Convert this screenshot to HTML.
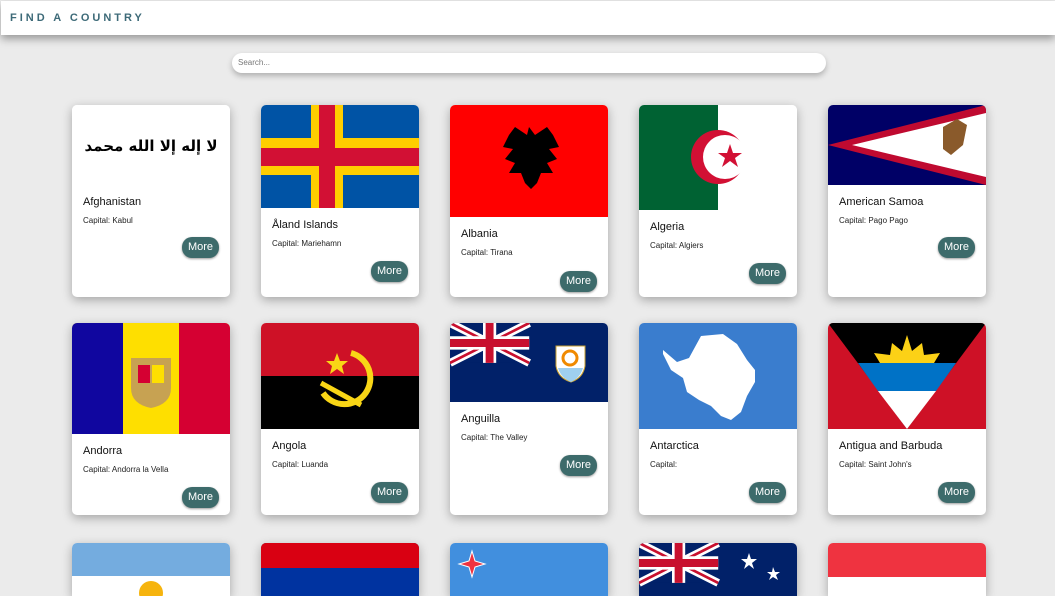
<!DOCTYPE html>
<html style="width:1055px;height:596px;overflow:hidden"><head><meta charset="utf-8"><style>
*{box-sizing:border-box;margin:0;padding:0}
body{width:1055px;height:596px;overflow:hidden;background:#ebebeb;font-family:"Liberation Sans","DejaVu Sans",sans-serif;position:relative}
.hdr{position:absolute;left:1px;top:1px;width:1054px;height:34px;background:#fff;box-shadow:0 4px 8px rgba(0,0,0,.35)}
.hdr span{position:absolute;left:9px;top:11px;font-size:11px;font-weight:bold;letter-spacing:3px;color:#3d6a78}
.search{position:absolute;left:232px;top:53px;width:594px;height:20px;border-radius:10px;background:#fff;box-shadow:0 3px 6px rgba(0,0,0,.25);font-size:8px;color:#777;padding:5px 0 0 6px}
.card{position:absolute;width:158px;height:192px;background:#fff;border-radius:5px;box-shadow:0 3px 10px rgba(0,0,0,.3);overflow:hidden}
.card.r3{height:53px;border-radius:5px 5px 0 0}
.card svg{display:block;width:158px}
.t{font-size:11px;line-height:14px;margin:10px 0 0 11px;color:#111}
.c{font-size:8px;line-height:10px;margin:7px 0 0 11px;color:#222}
.b{position:absolute;right:11px;width:37px;height:21px;border-radius:10px;background:#3d6b6b;color:#fff;font-size:11px;text-align:center;line-height:21px;box-shadow:0 1px 2px rgba(0,0,0,.4)}
</style></head><body>
<div class="hdr"><span>FIND A COUNTRY</span></div>
<div class="search">Search...</div>

<svg width="0" height="0" style="position:absolute"><defs>
<g id="uj"><rect width="60" height="30" fill="#012169"/><path d="M0 0L60 30M60 0L0 30" stroke="#fff" stroke-width="6"/><path d="M0 0L60 30M60 0L0 30" stroke="#c8102e" stroke-width="2"/><path d="M30 0V30M0 15H60" stroke="#fff" stroke-width="10"/><path d="M30 0V30M0 15H60" stroke="#c8102e" stroke-width="6"/></g>
</defs></svg>

<div class="card" style="left:72px;top:105px"><svg height="80" viewBox="0 0 158 80"><rect width="158" height="80" fill="#fff"/><text x="79" y="46" text-anchor="middle" font-size="15" font-weight="bold" font-family="DejaVu Sans" fill="#000">لا إله إلا الله محمد</text></svg>
<div class="t">Afghanistan</div><div class="c">Capital: Kabul</div><div class="b" style="top:132px">More</div></div>

<div class="card" style="left:261px;top:105px"><svg height="103" viewBox="0 0 158 103"><rect width="158" height="103" fill="#0053a5"/><rect x="50" width="32" height="103" fill="#ffce00"/><rect y="33" width="158" height="37" fill="#ffce00"/><rect x="58" width="16" height="103" fill="#d21034"/><rect y="43" width="158" height="18" fill="#d21034"/></svg>
<div class="t">Åland Islands</div><div class="c">Capital: Mariehamn</div><div class="b" style="top:156px">More</div></div>

<div class="card" style="left:450px;top:105px"><svg height="112" viewBox="0 0 158 112"><rect width="158" height="112" fill="#f00"/><path d="M79 22l6 8 12-8 6 8 6 12-10 2 8 10-10 4 6 10-12 0-4 10-6 6-6-6-4-10-12 0 6-10-10-4 8-10-10-2 6-12 6-8 12 8z" fill="#000"/></svg>
<div class="t">Albania</div><div class="c">Capital: Tirana</div><div class="b" style="top:166px">More</div></div>

<div class="card" style="left:639px;top:105px"><svg height="105" viewBox="0 0 158 105"><rect width="158" height="105" fill="#fff"/><rect width="79" height="105" fill="#006233"/><circle cx="79" cy="52" r="27" fill="#d21034"/><circle cx="86" cy="52" r="22" fill="#fff"/><path d="M91 39l3 9h9l-7 5 3 9-8-6-8 6 3-9-7-5h9z" fill="#d21034"/></svg>
<div class="t">Algeria</div><div class="c">Capital: Algiers</div><div class="b" style="top:158px">More</div></div>

<div class="card" style="left:828px;top:105px"><svg height="80" viewBox="0 0 158 80"><rect width="158" height="80" fill="#000066"/><path d="M158 0V80L0 40z" fill="#bf0a30"/><path d="M158 8V72L24 40z" fill="#fff"/><path d="M115 22l14-8 10 6-4 20-12 10-8-6z" fill="#8a5a2b"/></svg>
<div class="t">American Samoa</div><div class="c">Capital: Pago Pago</div><div class="b" style="top:132px">More</div></div>

<div class="card" style="left:72px;top:323px"><svg height="111" viewBox="0 0 158 111"><rect width="158" height="111" fill="#fedf00"/><rect width="51" height="111" fill="#10069f"/><rect x="107" width="51" height="111" fill="#d50032"/><path d="M59 35h40v30q0 16-20 20q-20-4-20-20z" fill="#c7a252"/><rect x="66" y="42" width="12" height="18" fill="#d50032"/><rect x="80" y="42" width="12" height="18" fill="#fedf00"/></svg>
<div class="t">Andorra</div><div class="c">Capital: Andorra la Vella</div><div class="b" style="top:164px">More</div></div>

<div class="card" style="left:261px;top:323px"><svg height="106" viewBox="0 0 158 106"><rect width="158" height="53" fill="#ce1126"/><rect y="53" width="158" height="53" fill="#000"/><path d="M90 30a26 26 0 1 1-28 40" fill="none" stroke="#f9d616" stroke-width="6"/><path d="M60 60l40 22" stroke="#f9d616" stroke-width="5"/><path d="M76 30l3 8h8l-6 5 2 8-7-5-7 5 2-8-6-5h8z" fill="#f9d616"/></svg>
<div class="t">Angola</div><div class="c">Capital: Luanda</div><div class="b" style="top:159px">More</div></div>

<div class="card" style="left:450px;top:323px"><svg height="79" viewBox="0 0 158 79"><rect width="158" height="79" fill="#012169"/><use href="#uj" transform="scale(1.32 1.33)"/><path d="M106 23h29v20q-2 12-14 16q-13-4-15-16z" fill="#fff" stroke="#c8a030"/><path d="M108 45h25q-3 10-12 14q-10-4-13-14z" fill="#9fd0f0"/><circle cx="120" cy="35" r="7" fill="none" stroke="#f08a00" stroke-width="3"/></svg>
<div class="t">Anguilla</div><div class="c">Capital: The Valley</div><div class="b" style="top:132px">More</div></div>

<div class="card" style="left:639px;top:323px"><svg height="106" viewBox="0 0 158 106"><rect width="158" height="106" fill="#3a7dce"/><path d="M24 27l14 12 12-4 12-22 22-2 14 10 10 16 8 10 0 12-8 14-6 16-10 8-10-4-10-10-12-6-12-8-4-14-12-8-8-16z" fill="#fff"/></svg>
<div class="t">Antarctica</div><div class="c">Capital: </div><div class="b" style="top:159px">More</div></div>

<div class="card" style="left:828px;top:323px"><svg height="106" viewBox="0 0 158 106"><rect width="158" height="106" fill="#ce1126"/><path d="M0 0H158L79 106z" fill="#000"/><path d="M52 40l-6-10 16 2 2-12 10 8 5-16 5 16 10-8 2 12 16-2-6 10 8 2z" fill="#fcd116"/><path d="M30 40H128L108 68H50z" fill="#0072c6"/><path d="M50 68H108L79 106z" fill="#fff"/></svg>
<div class="t">Antigua and Barbuda</div><div class="c">Capital: Saint John's</div><div class="b" style="top:159px">More</div></div>

<div class="card r3" style="left:72px;top:543px"><svg height="100" viewBox="0 0 158 100"><rect width="158" height="100" fill="#fff"/><rect width="158" height="33" fill="#74acdf"/><rect y="67" width="158" height="33" fill="#74acdf"/><circle cx="79" cy="50" r="12" fill="#f6b40e"/></svg></div>
<div class="card r3" style="left:261px;top:543px"><svg height="100" viewBox="0 0 158 100"><rect width="158" height="100" fill="#f2a800"/><rect width="158" height="66" fill="#0033a0"/><rect width="158" height="25" fill="#d90012"/></svg></div>
<div class="card r3" style="left:450px;top:543px"><svg height="100" viewBox="0 0 158 100"><rect width="158" height="100" fill="#418fde"/><path d="M22 8l3 10 10 3-10 3-3 10-3-10-10-3 10-3z" fill="#ef3340" stroke="#fff"/></svg></div>
<div class="card r3" style="left:639px;top:543px"><svg height="100" viewBox="0 0 158 100"><rect width="158" height="100" fill="#012169"/><use href="#uj" transform="scale(1.32 1.33)"/><path d="M110 10l2 6 6 0-5 4 2 6-5-4-5 4 2-6-5-4 6 0z M134 24l2 5 5 0-4 3 2 5-5-3-4 3 2-5-4-3 5 0z" fill="#fff"/></svg></div>
<div class="card r3" style="left:828px;top:543px"><svg height="100" viewBox="0 0 158 100"><rect width="158" height="100" fill="#fff"/><rect width="158" height="34" fill="#ef3340"/></svg></div>
</body></html>
